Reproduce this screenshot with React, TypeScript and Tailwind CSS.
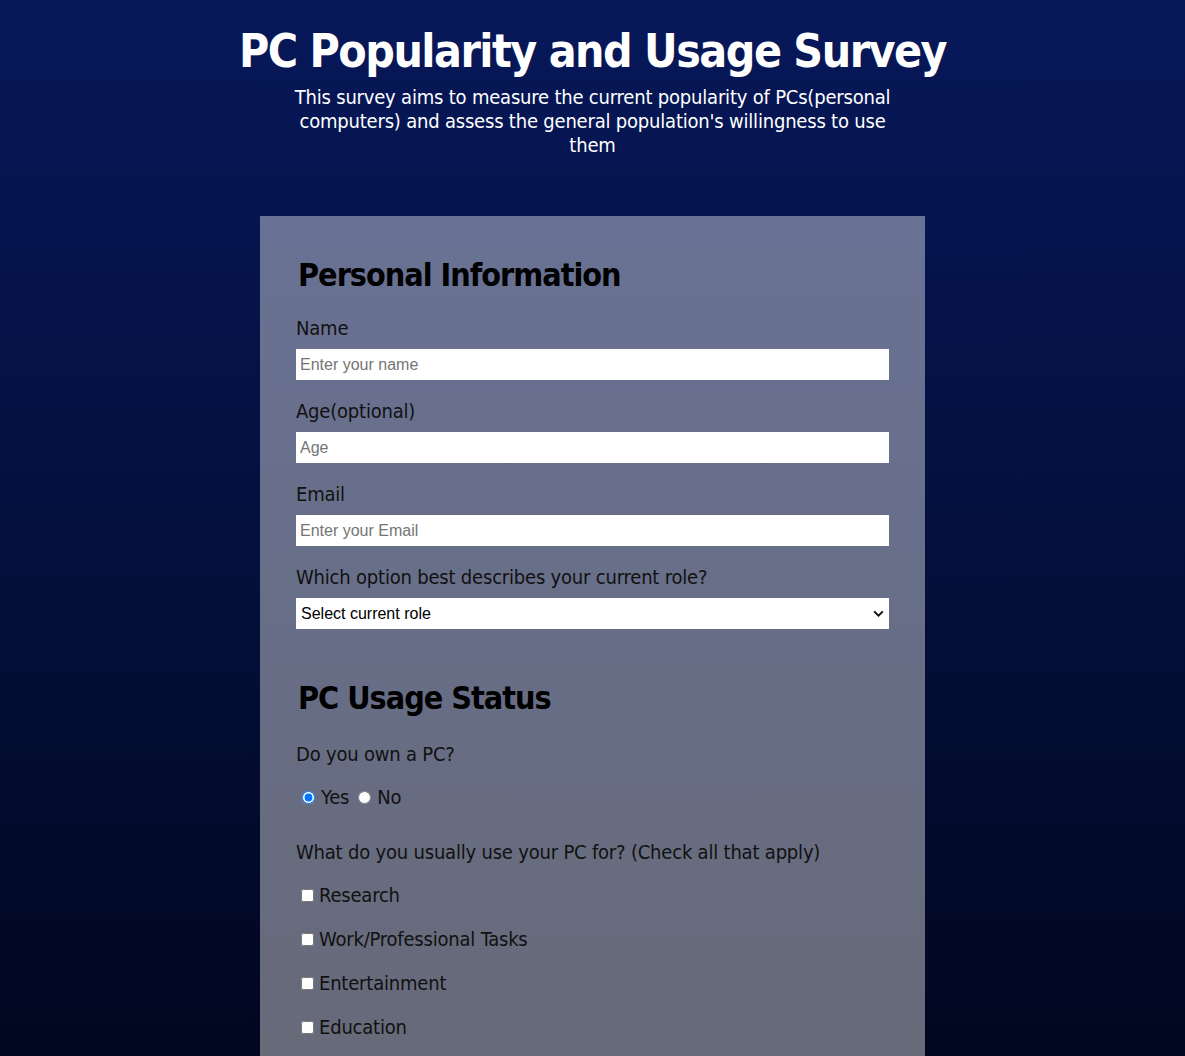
import { useState } from 'react';

const font = "font-['DejaVu_Sans_Condensed','DejaVu_Sans',sans-serif] [font-stretch:condensed]";

const fields = [
  { id: 'name', label: 'Name', type: 'text', placeholder: 'Enter your name' },
  { id: 'age', label: 'Age(optional)', type: 'number', placeholder: 'Age' },
  { id: 'email', label: 'Email', type: 'email', placeholder: 'Enter your Email' },
];

const uses = ['Research', 'Work/Professional Tasks', 'Entertainment', 'Education', 'Communication', 'Other'];

export default function App() {
  const [ownsPc, setOwnsPc] = useState('yes');
  const [checked, setChecked] = useState<string[]>([]);

  const toggle = (item: string) => {
    setChecked(checked.includes(item) ? checked.filter((c) => c !== item) : [...checked, item]);
  };

  return (
    <div className={`min-h-screen bg-[linear-gradient(to_bottom,#07185a,#010720)] bg-fixed pb-20 ${font}`}>
      <header className="text-center text-white">
        <h1 className="pt-[23px] text-[46px] font-bold leading-[56px] tracking-[-1.5px]">PC Popularity and Usage Survey</h1>
        <p className="mx-auto mt-[6px] text-[20px] leading-6 tracking-[-0.2px]">
          This survey aims to measure the current popularity of PCs(personal
          <br />
          computers) and assess the general population's willingness to use
          <br />
          them
        </p>
      </header>

      <form className="mx-auto mt-[59px] w-[665px] bg-white/40 px-9 pb-10 pt-10 text-[#111]">
        {/* Personal Information */}
        <h2 className="pl-[2px] text-[32px] font-bold leading-[38px] tracking-[-1px] text-black">Personal Information</h2>
        <div className="mt-[22px] flex flex-col gap-[19px]">
          {fields.map((f) => (
            <div key={f.id} className="flex flex-col">
              <label htmlFor={f.id} className="mb-[9px] text-[20px] leading-6 tracking-[-0.2px]">
                {f.label}
              </label>
              <input
                id={f.id}
                type={f.type}
                placeholder={f.placeholder}
                className="h-[31px] w-full bg-white px-1 font-['Liberation_Sans',Arial,sans-serif] text-base text-black outline-none placeholder:text-[#757575]"
              />
            </div>
          ))}
          <div className="flex flex-col">
            <label htmlFor="role" className="mb-[9px] text-[20px] leading-6 tracking-[-0.2px]">
              Which option best describes your current role?
            </label>
            <div className="relative">
              <select
                id="role"
                defaultValue=""
                className="h-[31px] w-full appearance-none bg-white pl-[5px] font-['Liberation_Sans',Arial,sans-serif] text-base text-black outline-none"
              >
                <option value="" disabled>
                  Select current role
                </option>
                <option value="student">Student</option>
                <option value="employed">Employed</option>
                <option value="unemployed">Unemployed</option>
                <option value="retired">Retired</option>
                <option value="other">Other</option>
              </select>
              <svg
                viewBox="0 0 12 8"
                className="pointer-events-none absolute right-[5px] top-[12px] h-[7px] w-[11px]"
                fill="none"
                stroke="#111"
                strokeWidth="2.2"
              >
                <path d="M1 1.5l5 5 5-5" />
              </svg>
            </div>
          </div>
        </div>

        {/* PC Usage Status */}
        <h2 className="mt-[50px] pl-[2px] text-[32px] font-bold leading-[38px] tracking-[-1px] text-black">PC Usage Status</h2>
        <p className="mt-[25px] text-[20px] leading-6 tracking-[-0.2px]">Do you own a PC?</p>
        <div className="mt-[19px] flex items-center text-[20px] leading-6 tracking-[-0.2px]">
          <label className="flex items-center">
            <input
              type="radio"
              name="own"
              checked={ownsPc === 'yes'}
              onChange={() => setOwnsPc('yes')}
              className="ml-[6px] mr-[6px] h-[13px] w-[13px]"
            />
            Yes
          </label>
          <label className="ml-[3px] flex items-center">
            <input
              type="radio"
              name="own"
              checked={ownsPc === 'no'}
              onChange={() => setOwnsPc('no')}
              className="ml-[6px] mr-[6px] h-[13px] w-[13px]"
            />
            No
          </label>
        </div>

        <p className="mt-[31px] text-[20px] leading-6 tracking-[-0.2px]">What do you usually use your PC for? (Check all that apply)</p>
        <div className="mt-[19px] flex flex-col gap-5">
          {uses.map((u) => (
            <label key={u} className="flex items-center text-[20px] leading-6 tracking-[-0.2px]">
              <input
                type="checkbox"
                checked={checked.includes(u)}
                onChange={() => toggle(u)}
                className="ml-[5px] mr-[5px] h-[13px] w-[13px]"
              />
              {u}
            </label>
          ))}
        </div>

        <p className="mt-[30px] text-[20px] leading-6">Any additional comments?</p>
        <textarea
          placeholder="Enter your comments here..."
          className="mt-2 h-28 w-full bg-white p-1 font-['Liberation_Sans',Arial,sans-serif] text-base text-black outline-none placeholder:text-[#757575]"
        />
        <button type="submit" className="mt-8 h-10 w-full bg-[#07185a] text-[20px] text-white">
          Submit
        </button>
      </form>
    </div>
  );
}
